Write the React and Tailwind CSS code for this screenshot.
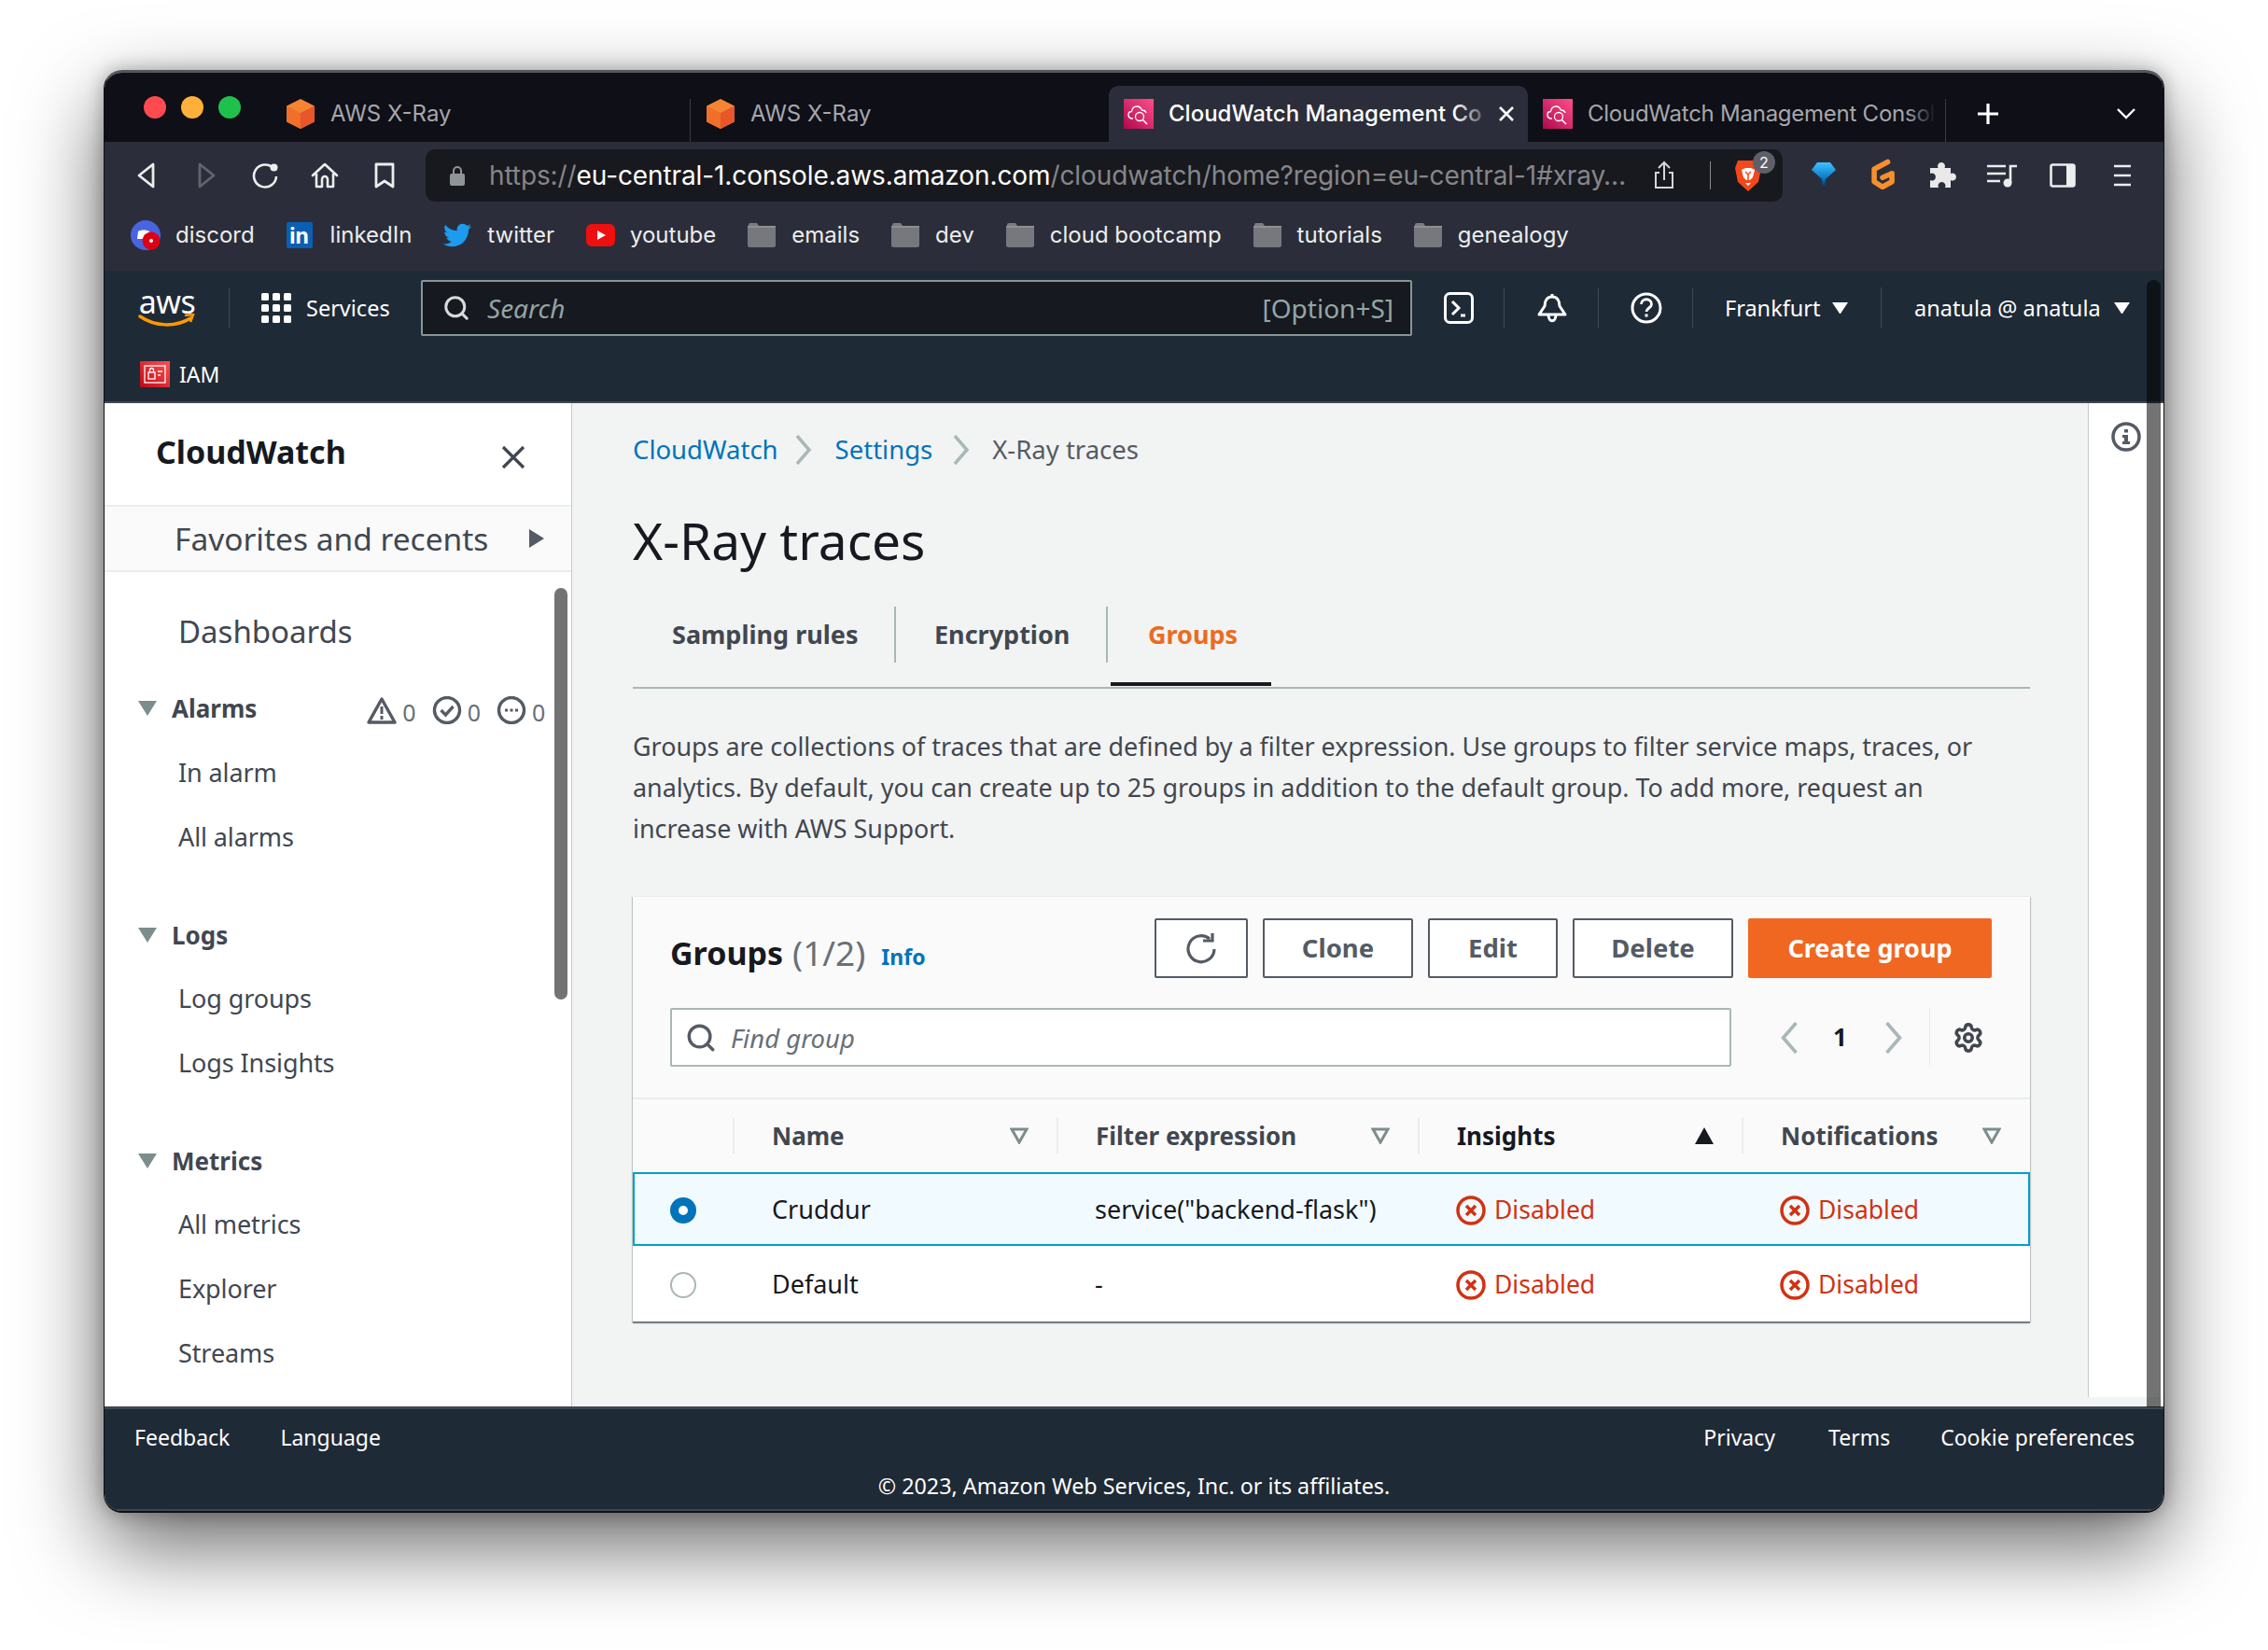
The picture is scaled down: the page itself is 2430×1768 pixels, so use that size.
import React from "react";
import { FaTwitter } from "react-icons/fa";
import { Settings, Search } from "lucide-react";

const Cube = () => (
  <svg width="34" height="34" viewBox="0 0 32 32" className="shrink-0">
    <polygon points="16,1 30,8 30,24 16,31 2,24 2,8" fill="#f58534" />
    <polygon points="2,8 16,15 16,31 2,24" fill="#f07029" />
    <polygon points="30,8 16,15 16,31 30,24" fill="#e8562a" />
  </svg>
);

const CW = ({ size = 32 }) => (
  <svg width={size} height={size} viewBox="0 0 32 32" className="shrink-0">
    <defs>
      <linearGradient id="cwg" x1="0" y1="1" x2="1" y2="0">
        <stop offset="0" stopColor="#b0084d" />
        <stop offset="1" stopColor="#ff4f8b" />
      </linearGradient>
    </defs>
    <rect width="32" height="32" fill="url(#cwg)" />
    <path d="M10 21H8c-2-.5-3-2-3-4 0-2 1.500-3.500 3.500-3.500C9 10 11.500 8 14 8c2.500 0 4.500 1.500 5.500 4 2 0 4 1 4.500 3" fill="none" stroke="#fff" strokeWidth="1.300" />
    <circle cx="17" cy="19" r="4.500" fill="none" stroke="#fff" strokeWidth="1.300" />
    <path d="M20.500 22.500l4.500 4.500" stroke="#fff" strokeWidth="1.600" />
  </svg>
);

const Folder = () => (
  <svg width="30" height="28" viewBox="0 0 30 28" className="shrink-0">
    <path d="M1 3a2 2 0 0 1 2-2h7l2 3H1z" fill="#7b7c82" />
    <rect x="0" y="4" width="30" height="23" rx="2.500" fill="#77787e" />
    <rect x="0" y="4" width="30" height="2" fill="#8d8e93" />
  </svg>
);

const Bookmark = ({ icon, label, gap = 16 }) => (
  <div className="flex items-center" style={{ gap }}>
    <span className="flex h-[32px] items-center">{icon}</span>
    <span className="text-[24px] leading-[32px] text-[#eceded]">{label}</span>
  </div>
);

const Tab = ({ icon, label, active, width, sep = true, fade }) => (
  <div
    className={`relative flex h-[60px] shrink-0 items-center ${active ? "rounded-t-[10px] bg-[#2b2e3a]" : ""}`}
    style={{ width }}
  >
    <span className="ml-[15px] flex w-[34px] justify-center">{icon}</span>
    <span className={`ml-[15px] whitespace-nowrap text-[24px] ${active ? "font-medium text-white" : "text-[#a6a7ab]"} ${fade && !active ? "tracking-[-0.25px]" : ""}`}>
      {label}
    </span>
    {active && <span className="absolute left-[370px] top-0 h-full w-[50px] bg-gradient-to-r from-transparent to-[#2b2e3a] to-80%" />}
    {fade && !active && <span className="absolute left-[405px] top-0 h-full w-[36px] bg-gradient-to-r from-transparent to-[#0e0f17] to-90%" />}
    {active && (
      <svg width="18" height="18" viewBox="0 0 18 18" className="absolute left-[417px] top-[21px]">
        <path d="M2 2l14 14M16 2L2 16" stroke="#fff" strokeWidth="2.600" />
      </svg>
    )}
    {sep && <span className="absolute right-0 bottom-0 h-[46px] w-px bg-[#3a3b42]" />}
  </div>
);

const TabStrip = () => (
  <div className="flex h-[74px] items-end bg-[#0e0f17]">
    <div className="flex h-full w-[178px] shrink-0 items-start gap-[16px] pl-[42px] pt-[25px]">
      <span className="h-[24px] w-[24px] rounded-full bg-[#ff4b4f]" />
      <span className="h-[24px] w-[24px] rounded-full bg-[#ffb03a]" />
      <span className="h-[24px] w-[24px] rounded-full bg-[#1fc14c]" />
    </div>
    <Tab icon={<Cube />} label="AWS X-Ray" width={450} />
    <Tab icon={<Cube />} label="AWS X-Ray" width={448} sep={false} />
    <Tab icon={<CW />} label="CloudWatch Management Co" width={449} active sep={false} />
    <Tab icon={<CW />} label="CloudWatch Management Consol" width={448} fade />
    <div className="relative flex h-[60px] flex-1 items-center">
      <svg width="24" height="24" viewBox="0 0 24 24" className="ml-[33px]">
        <path d="M12 1v22M1 12h22" stroke="#fff" strokeWidth="3.200" />
      </svg>
      <svg width="22" height="14" viewBox="0 0 22 14" className="ml-[125px]">
        <path d="M2 2l9 9 9-9" fill="none" stroke="#fff" strokeWidth="2.400" />
      </svg>
    </div>
  </div>
);

const Toolbar = () => (
  <div className="flex h-[72px] items-center bg-[#2b2e3a]">
    <svg width="22" height="30" viewBox="0 0 22 30" className="ml-[34px]">
      <path d="M18 3v24L3 15z" fill="none" stroke="#eceded" strokeWidth="2.800" strokeLinejoin="round" />
    </svg>
    <svg width="22" height="30" viewBox="0 0 22 30" className="ml-[42px]">
      <path d="M4 3v24l15-12z" fill="none" stroke="#62646c" strokeWidth="2.800" strokeLinejoin="round" />
    </svg>
    <svg width="30" height="30" viewBox="0 0 30 30" className="ml-[37px]">
      <path d="M24 7.500A12 12 0 1 0 27 16" fill="none" stroke="#eceded" strokeWidth="2.600" />
      <circle cx="24.500" cy="6.500" r="4" fill="#eceded" />
    </svg>
    <svg width="30" height="28" viewBox="0 0 30 28" className="ml-[34px]">
      <path d="M2 14L15 2l13 12M6 12v14h6v-8a3 3 0 0 1 6 0v8h6V12" fill="none" stroke="#eceded" strokeWidth="2.600" strokeLinejoin="round" strokeLinecap="round" />
    </svg>
    <svg width="22" height="28" viewBox="0 0 22 28" className="ml-[38px]">
      <path d="M2 2h18v24l-9-6-9 6z" fill="none" stroke="#eceded" strokeWidth="2.800" strokeLinejoin="round" />
    </svg>
    <div className="ml-[33px] flex h-[56px] w-[1454px] items-center rounded-[10px] bg-[#18191e]">
      <svg width="16" height="22" viewBox="0 0 16 22" className="ml-[26px]">
        <path d="M4 9V6a4 4 0 0 1 8 0v3" fill="none" stroke="#8f9496" strokeWidth="2" />
        <rect x="0" y="9" width="16" height="13" rx="2" fill="#8f9496" />
      </svg>
      <span className="ml-[26px] w-[1221px] whitespace-nowrap text-[28px] tracking-[-0.1px] text-[#85868b]">
        https://<span className="text-white">eu-central-1.console.aws.amazon.com</span>/cloudwatch/home?region=eu-central-1#xray…
      </span>
      <svg width="24" height="32" viewBox="0 0 24 32" className="ml-[26px]">
        <path d="M12 2v19M6 8l6-6 6 6M7 13H3v16h18V13h-4" fill="none" stroke="#d5d6d8" strokeWidth="2" />
      </svg>
      <span className="ml-[37px] h-[30px] w-px bg-[#8a8b8f]" />
      <div className="relative ml-[25px]">
        <svg width="30" height="36" viewBox="0 0 30 36">
          <path d="M4 2h22l3 8-3 15-11 10L4 25 1 10z" fill="#f1491c" />
          <path d="M8 12l4-2h6l4 2-2 8-3 3h-4l-3-3zM12 26h6l-3 3z" fill="#fff" />
          <path d="M12 14l3 3 3-3M15 17v6" stroke="#f1491c" strokeWidth="1.500" fill="none" />
        </svg>
        <span className="absolute -right-[14px] -top-[8px] flex h-[24px] w-[24px] items-center justify-center rounded-full bg-[#5e5f69] text-[16px] text-white">2</span>
      </div>
    </div>
    <svg width="28" height="30" viewBox="0 0 28 30" className="ml-[30px]">
      <defs>
        <linearGradient id="dia" x1="0" y1="0" x2="0" y2="1">
          <stop offset="0" stopColor="#3fc3ff" />
          <stop offset="0.6" stopColor="#0a78c8" />
          <stop offset="1" stopColor="#0b2a4a" />
        </linearGradient>
      </defs>
      <path d="M7 1h14l6 8-11 10-1 10h-2l-1-10L1 9z" fill="url(#dia)" />
    </svg>
    <svg width="36" height="38" viewBox="0 0 32 34" className="ml-[31px]">
      <path d="M21 4L8 11v12l8 5 9-5v-8l-9 4" fill="none" stroke="#f5902c" strokeWidth="5" strokeLinecap="round" strokeLinejoin="round" />
    </svg>
    <svg width="32" height="32" viewBox="0 0 32 32" className="ml-[30px]">
      <path d="M3 8h8.500a4 4 0 1 1 7 0H25v6a4 4 0 1 1 0 7v8h-6a4 4 0 1 0-7 0H3v-8a4 4 0 1 0 0-7z" fill="#e9e9ea" />
    </svg>
    <svg width="34" height="26" viewBox="0 0 34 26" className="ml-[32px]">
      <path d="M0 3h20M0 11h20M0 19h14" stroke="#eceded" strokeWidth="2.600" />
      <path d="M25 21V3h7" fill="none" stroke="#eceded" strokeWidth="2.600" />
      <circle cx="22" cy="21" r="4.500" fill="#eceded" />
    </svg>
    <svg width="28" height="26" viewBox="0 0 28 26" className="ml-[33px]">
      <rect x="1.500" y="1.500" width="25" height="23" rx="2" fill="none" stroke="#eceded" strokeWidth="2.600" />
      <rect x="18" y="1.500" width="8.500" height="23" fill="#eceded" />
    </svg>
    <svg width="20" height="26" viewBox="0 0 20 26" className="ml-[40px]">
      <path d="M1 3h18M1 13h18M1 23h18" stroke="#eceded" strokeWidth="2.600" />
    </svg>
  </div>
);

const Bookmarks = () => (
  <div className="flex h-[66px] items-start gap-[34px] bg-[#2b2e3a] pl-[28px] pt-[12px]">
    <Bookmark
      label="discord"
      icon={
        <svg width="32" height="32" viewBox="0 0 32 32">
          <circle cx="16" cy="16" r="16" fill="#4864e0" />
          <path d="M8 12c3-2 9-2 12 0l1 8H7z" fill="#fff" />
          <circle cx="22" cy="22" r="9.500" fill="#dd0014" />
          <circle cx="22" cy="22" r="2" fill="#fff" />
        </svg>
      }
    />
    <Bookmark
      label="linkedIn"
      gap={19}
      icon={
        <span className="flex h-[28px] w-[28px] items-end justify-center rounded-[2px] bg-[#0a5fb4] text-[23px] font-bold leading-[26px] text-white">in</span>
      }
    />
    <Bookmark label="twitter" gap={17} icon={<FaTwitter size={30} color="#1d9bf0" />} />
    <Bookmark
      label="youtube"
      icon={
        <svg width="31" height="24" viewBox="0 0 31 24">
          <rect width="31" height="24" rx="6" fill="#ee0f0f" />
          <path d="M12 7l9 5-9 5z" fill="#fff" />
        </svg>
      }
    />
    <Bookmark label="emails" gap={17} icon={<Folder />} />
    <Bookmark label="dev" gap={17} icon={<Folder />} />
    <Bookmark label="cloud bootcamp" gap={17} icon={<Folder />} />
    <Bookmark label="tutorials" gap={17} icon={<Folder />} />
    <Bookmark label="genealogy" gap={17} icon={<Folder />} />
  </div>
);

const HDiv = ({ ml }) => <span className="h-[44px] w-px bg-[#414750]" style={{ marginLeft: ml }} />;

const Caret = ({ size = 16, color = "#fff" }) => (
  <svg width={size} height={size * 0.75} viewBox="0 0 16 12" className="shrink-0">
    <path d="M0 0h16L8 12z" fill={color} />
  </svg>
);

const AwsHeader = () => (
  <div className="h-[142px] border-b-2 border-[#414750] bg-[#1f2a37] text-white">
    <div className="flex h-[80px] items-center pl-[36px]">
      <div className="relative flex h-[44px] w-[62px] flex-col items-center">
        <span className="text-[34px] leading-[30px] tracking-[-0.5px] text-white">aws</span>
        <svg width="62" height="16" viewBox="0 0 62 16" className="absolute top-[28px]">
          <path d="M2 3c16 11 38 12 54 2" fill="none" stroke="#f90" strokeWidth="3.500" strokeLinecap="round" />
          <path d="M50 2l9-1-3 8" fill="none" stroke="#f90" strokeWidth="2.600" />
        </svg>
      </div>
      <HDiv ml={35} />
      <svg width="32" height="32" viewBox="0 0 32 32" className="ml-[34px]">
        {[0, 12, 24].map((x) =>
          [0, 12, 24].map((y) => <rect key={`${x}-${y}`} x={x} y={y} width="8" height="8" rx="1.500" fill="#fff" />)
        )}
      </svg>
      <span className="ml-[16px] mt-[1px] w-[123px] text-[23.5px]">Services</span>
      <div className="flex h-[60px] w-[1062px] items-center rounded-[2px] border-2 border-[#879596] bg-[#16191f] pl-[21px] pr-[18px]">
        <Search size={30} strokeWidth={2.400} color="#d5dbdb" />
        <span className="ml-[18px] flex-1 text-[28px] italic text-[#95a5a6]">Search</span>
        <span className="text-[28px] text-[#95a5a6]">[Option+S]</span>
      </div>
      <svg width="32" height="34" viewBox="0 0 32 34" className="ml-[34px]">
        <rect x="1.500" y="1.500" width="29" height="31" rx="5" fill="none" stroke="#fff" strokeWidth="3" />
        <path d="M9 10l7 7-7 7M18 25h5" fill="none" stroke="#fff" strokeWidth="3" />
      </svg>
      <HDiv ml={32} />
      <svg width="32" height="34" viewBox="0 0 32 34" className="ml-[35px]">
        <path d="M16 2v3M8 15c0-6 3-10 8-10s8 4 8 10l6 9H2zM12 24c0 9 8 9 8 0" fill="none" stroke="#fff" strokeWidth="3" strokeLinejoin="round" />
      </svg>
      <HDiv ml={33} />
      <svg width="34" height="34" viewBox="0 0 34 34" className="ml-[34px]">
        <circle cx="17" cy="17" r="15" fill="none" stroke="#fff" strokeWidth="3" />
        <path d="M11.500 13c0-7 11-7 11 0 0 4-5.500 4-5.500 8" fill="none" stroke="#fff" strokeWidth="2.800" />
        <rect x="15.500" y="23.500" width="3" height="3" fill="#fff" />
      </svg>
      <HDiv ml={32} />
      <span className="ml-[34px] mt-[1px] w-[102px] text-[23.5px]">Frankfurt</span>
      <span className="ml-[13px]"><Caret size={17} /></span>
      <HDiv ml={35} />
      <span className="ml-[35px] mt-[1px] w-[201px] whitespace-nowrap text-[23.5px]">anatula @ anatula</span>
      <span className="ml-[13px]"><Caret size={17} /></span>
    </div>
    <div className="flex h-[60px] items-start pl-[38px] pt-[17px]">
      <svg width="32" height="28" viewBox="0 0 32 28">
        <defs>
          <linearGradient id="iam" x1="0" y1="1" x2="1" y2="0">
            <stop offset="0" stopColor="#bd0816" />
            <stop offset="1" stopColor="#ff5252" />
          </linearGradient>
        </defs>
        <rect width="32" height="28" fill="url(#iam)" />
        <rect x="5" y="5" width="22" height="18" fill="none" stroke="#fff" strokeWidth="1.300" />
        <rect x="9" y="12" width="7" height="7" fill="none" stroke="#fff" strokeWidth="1.300" />
        <path d="M10.500 12V9.500a2 2 0 0 1 4 0V12M19 11h5M19 15h3" fill="none" stroke="#fff" strokeWidth="1.300" />
      </svg>
      <span className="ml-[10px] text-[23px] leading-[28px]">IAM</span>
    </div>
  </div>
);

const NavItem = ({ children }) => (
  <div className="flex h-[69px] items-center pl-[79px] text-[27px] tracking-[-0.1px] text-[#414750]">{children}</div>
);

const NavHead = ({ label, mt, extra }) => (
  <div className="flex h-[46px] items-center pl-[36px] text-[#414750]" style={{ marginTop: mt }}>
    <svg width="20" height="16" viewBox="0 0 20 16">
      <path d="M0 0h20L10 16z" fill="#7d8c8c" />
    </svg>
    <span className="ml-[16px] text-[26px] font-bold">{label}</span>
    {extra}
  </div>
);

const Count = ({ children, ml }) => (
  <span className="flex items-center" style={{ marginLeft: ml }}>
    {children}
    <span className="ml-[6px] mt-[6px] text-[25px] text-[#687078]">0</span>
  </span>
);

const AlarmCounts = () => (
  <span className="ml-[118px] mt-[4px] flex items-center">
    <Count ml={0}>
      <svg width="32" height="30" viewBox="0 0 32 30">
        <path d="M16 3l14 25H2z" fill="none" stroke="#545b64" strokeWidth="3.400" strokeLinejoin="round" />
        <path d="M14.500 11h3v8h-3zM14.500 21h3v4h-3z" fill="#545b64" />
      </svg>
    </Count>
    <Count ml={17}>
      <svg width="32" height="30" viewBox="0 0 32 30">
        <circle cx="16" cy="15" r="13.500" fill="none" stroke="#545b64" strokeWidth="3.400" />
        <path d="M9.500 15l5 5 8-9" fill="none" stroke="#545b64" strokeWidth="3.400" />
      </svg>
    </Count>
    <Count ml={17}>
      <svg width="32" height="30" viewBox="0 0 32 30">
        <circle cx="16" cy="15" r="13.500" fill="none" stroke="#545b64" strokeWidth="3.400" />
        <path d="M9 13.500h3v3H9zM14.500 13.500h3v3h-3zM20 13.500h3v3h-3z" fill="#545b64" />
      </svg>
    </Count>
  </span>
);

const Sidebar = () => (
  <div className="relative h-full w-[501px] shrink-0 overflow-hidden border-r border-[#c5cccc] bg-white">
    <div className="flex h-[109px] items-start pl-[55px] pt-[26px]">
      <span className="w-[370px] text-[34px] font-bold leading-[52px] text-[#16191f]">CloudWatch</span>
      <svg width="26" height="26" viewBox="0 0 26 26" className="mt-[19px]">
        <path d="M2 2l22 22M24 2L2 24" stroke="#414750" strokeWidth="3.200" />
      </svg>
    </div>
    <div className="flex h-[72px] items-center border-y-2 border-[#eaeded] bg-[#fafafa] pl-[75px]">
      <span className="w-[380px] text-[33.5px] text-[#414750]">Favorites and recents</span>
      <svg width="16" height="20" viewBox="0 0 16 20"><path d="M0 0l16 10L0 20z" fill="#545b64" /></svg>
    </div>
    <div className="mt-[28px] flex h-[72px] items-center pl-[79px] text-[33px] text-[#414750]">Dashboards</div>
    <NavHead label="Alarms" mt={23} extra={<AlarmCounts />} />
    <div className="mt-[12px]">
      <NavItem>In alarm</NavItem>
      <NavItem>All alarms</NavItem>
    </div>
    <NavHead label="Logs" mt={47} />
    <div className="mt-[11px]">
      <NavItem>Log groups</NavItem>
      <NavItem>Logs Insights</NavItem>
    </div>
    <NavHead label="Metrics" mt={47} />
    <div className="mt-[11px]">
      <NavItem>All metrics</NavItem>
      <NavItem>Explorer</NavItem>
      <NavItem>Streams</NavItem>
    </div>
    <span className="absolute left-[482px] top-[198px] h-[441px] w-[14px] rounded-full bg-black/55" />
  </div>
);

const Chevron = ({ dir = "right", w = 18, h = 32, color = "#aab7b8" }) => (
  <svg width={w} height={h} viewBox="0 0 18 32" className="shrink-0">
    <path d={dir === "right" ? "M2 1l13 15L2 31" : "M16 1L3 16l13 15"} fill="none" stroke={color} strokeWidth="3.500" />
  </svg>
);

const Btn = ({ w, children }) => (
  <div className="flex h-[64px] items-center justify-center rounded-[2px] border-2 border-[#545b64] bg-white text-[27.5px] font-bold text-[#545b64]" style={{ width: w }}>
    {children}
  </div>
);

const FilterIcon = ({ sorted }) =>
  sorted ? (
    <svg width="20" height="18" viewBox="0 0 20 18" className="shrink-0"><path d="M10 0l10 18H0z" fill="#16191f" /></svg>
  ) : (
    <svg width="20" height="18" viewBox="0 0 20 18" className="shrink-0"><path d="M2 2h16l-8 14z" fill="none" stroke="#7d8c8c" strokeWidth="3" /></svg>
  );

const Th = ({ label, pr = 30, sorted, dark }) => (
  <div className="flex h-[38px] items-center justify-between border-l-2 border-[#eaeded] pl-[40px]" style={{ paddingRight: pr }}>
    <span className={`text-[26px] font-bold ${dark ? "text-[#16191f]" : "text-[#414750]"}`}>{label}</span>
    <FilterIcon sorted={sorted} />
  </div>
);

const Disabled = () => (
  <div className="flex items-center gap-[9px] pl-[41px] text-[26.5px] text-[#d13212]">
    <svg width="32" height="32" viewBox="0 0 32 32" className="shrink-0">
      <circle cx="16" cy="16" r="14" fill="none" stroke="#d13212" strokeWidth="3.500" />
      <path d="M11 11l10 10M21 11L11 21" stroke="#d13212" strokeWidth="3.500" />
    </svg>
    Disabled
  </div>
);

const Row = ({ selected, name, filter }) => (
  <div className={`grid grid-cols-[107px_347px_387px_347px_309px] items-center pt-[2px] text-[27px] text-[#16191f] ${selected ? "h-[79px] bg-[#f1faff] ring-2 ring-inset ring-[#00a1c9]" : "h-[81px] bg-white"}`}>
    <div className="pl-[40px]">
      {selected ? (
        <span className="flex h-[28px] w-[28px] items-center justify-center rounded-full bg-[#0073bb]">
          <span className="h-[10px] w-[10px] rounded-full bg-white" />
        </span>
      ) : (
        <span className="block h-[28px] w-[28px] rounded-full border-2 border-[#aab7b8] bg-white" />
      )}
    </div>
    <div className="pl-[42px]">{name}</div>
    <div className="pl-[41px]">{filter}</div>
    <Disabled />
    <Disabled />
  </div>
);

const Card = () => (
  <div className="mt-[50px] border-t border-[#eaeded] bg-[#fafafa] shadow-[0_2px_1px_0_rgba(0,28,36,0.45),1px_1px_1px_0_rgba(0,28,36,0.15),-1px_1px_1px_0_rgba(0,28,36,0.15)]">
    <div className="flex h-[87px] items-center pl-[40px] pr-[41px] pt-[23px]">
      <span className="mt-[10px] text-[34px] font-bold leading-[44px] text-[#16191f]">Groups</span>
      <span className="ml-[10px] mt-[10px] text-[37px] leading-[44px] text-[#687078]">(1/2)</span>
      <span className="ml-[17px] mt-[18px] flex-1 text-[23px] font-bold leading-[30px] text-[#0073bb]">Info</span>
      <div className="flex gap-[16px]">
        <Btn w={100}>
          <svg width="34" height="34" viewBox="0 0 34 34">
            <path d="M26 7A14 14 0 1 0 31 18" fill="none" stroke="#545b64" strokeWidth="3.200" />
            <path d="M19 9h10V1" fill="none" stroke="#545b64" strokeWidth="3.200" />
          </svg>
        </Btn>
        <Btn w={161}>Clone</Btn>
        <Btn w={139}>Edit</Btn>
        <Btn w={172}>Delete</Btn>
        <div className="flex h-[64px] w-[261px] items-center justify-center rounded-[2px] bg-[#f06722] text-[27px] font-bold text-white">Create group</div>
      </div>
    </div>
    <div className="mt-[32px] flex h-[63px] items-center pl-[40px]">
      <div className="flex h-[63px] w-[1137px] items-center rounded-[2px] border-2 border-[#aab7b8] bg-white pl-[14px]">
        <Search size={34} strokeWidth={2.400} color="#545b64" />
        <span className="ml-[15px] mt-[2px] text-[27.5px] italic text-[#687078]">Find group</span>
      </div>
      <span className="ml-[52px]"><Chevron dir="left" w={20} h={34} /></span>
      <span className="ml-[37px] text-[26px] font-bold text-[#16191f]">1</span>
      <span className="ml-[40px]"><Chevron w={20} h={34} /></span>
      <span className="ml-[28px] h-[63px] w-px bg-[#eaeded]" />
      <span className="ml-[24px] flex"><Settings size={34} strokeWidth={2.500} color="#414750" /></span>
    </div>
    <div className="mt-[33px] grid h-[80px] grid-cols-[107px_347px_387px_347px_309px] items-center border-t-2 border-[#eaeded]">
      <div className="flex h-[38px] items-center" />
      <Th label="Name" />
      <Th label="Filter expression" />
      <Th label="Insights" sorted dark />
      <Th label="Notifications" pr={31} />
    </div>
    <Row selected name="Cruddur" filter={'service("backend-flask")'} />
    <Row name="Default" filter="-" />
  </div>
);

const Main = () => (
  <div className="flex-1 pl-[65px] pr-[62px]">
    <div className="flex h-[100px] items-center text-[27.5px]">
      <span className="text-[#0073bb]">CloudWatch</span>
      <span className="ml-[18px]"><Chevron /></span>
      <span className="ml-[25px] text-[#0073bb]">Settings</span>
      <span className="ml-[22px]"><Chevron /></span>
      <span className="ml-[24px] text-[#545b64]">X-Ray traces</span>
    </div>
    <h1 className="flex h-[94px] items-center text-[55px] font-normal text-[#16191f]">X-Ray traces</h1>
    <div className="flex h-[112px] items-start border-b-2 border-[#aab7b8] pt-[24px] text-[27px] font-bold">
      <div className="flex h-[60px] w-[282px] items-center border-r-2 border-[#aab7b8] pl-[42px] text-[#414750]">Sampling rules</div>
      <div className="flex h-[60px] w-[227px] items-center border-r-2 border-[#aab7b8] pl-[41px] text-[#414750]">Encryption</div>
      <div className="relative flex h-[60px] w-[175px] items-center pl-[43px] text-[#ec6b1f]">
        Groups
        <span className="absolute bottom-[-25px] left-[3px] h-[4px] w-[172px] bg-[#16191f]" />
      </div>
    </div>
    <p className="mt-[40px] text-[26.9px] leading-[44px] text-[#414750]">
      Groups are collections of traces that are defined by a filter expression. Use groups to filter service maps, traces, or
      <br />
      analytics. By default, you can create up to 25 groups in addition to the default group. To add more, request an
      <br />
      increase with AWS Support.
    </p>
    <Card />
  </div>
);

const RightPanel = () => (
  <div className="mb-[10px] w-[81px] shrink-0 border-l border-[#c5cccc] bg-white pl-[24px] pt-[20px]">
    <svg width="32" height="32" viewBox="0 0 32 32">
      <circle cx="16" cy="16" r="14" fill="none" stroke="#545b64" strokeWidth="3.500" />
      <path d="M14 8h4v3.500h-4zM12 14h6v7h2v3h-8v-3h2v-4h-2z" fill="#545b64" />
    </svg>
  </div>
);

const Footer = () => (
  <div className="h-[113px] border-y-[3px] border-[#414750] bg-[#1f2a37] text-[23.3px] leading-[32px] text-white">
    <div className="flex items-center pl-[32px] pr-[31px] pt-[14px] text-[23px]">
      <span>Feedback</span>
      <span className="ml-[54px] flex-1">Language</span>
      <span>Privacy</span>
      <span className="ml-[57px]">Terms</span>
      <span className="ml-[54px]">Cookie preferences</span>
    </div>
    <div className="mt-[20px] text-center">© 2023, Amazon Web Services, Inc. or its affiliates.</div>
  </div>
);

export default function App() {
  return (
    <div className="h-[1768px] w-[2430px] overflow-hidden bg-white pl-[111px] pt-[75px]" style={{ fontFamily: '"Noto Sans", sans-serif' }}>
      <div className="relative h-[1546px] w-[2208px] overflow-hidden rounded-[20px] border border-b-2 border-[#111] border-t-[3px] border-t-[#55565b] bg-[#f2f3f3] shadow-[0_35px_90px_0_rgba(0,0,0,0.6),0_0_20px_0_rgba(0,0,0,0.3)]">
        <div style={{ fontFamily: 'Inter, sans-serif' }}>
          <TabStrip />
          <Toolbar />
          <Bookmarks />
        </div>
        <AwsHeader />
        <div className="flex h-[1075px] bg-[#f2f3f3]">
          <Sidebar />
          <Main />
          <RightPanel />
        </div>
        <Footer />
        <span className="absolute left-[2188px] top-[222px] h-[1208px] w-[15px] rounded-t-full bg-black/55" />
      </div>
    </div>
  );
}
